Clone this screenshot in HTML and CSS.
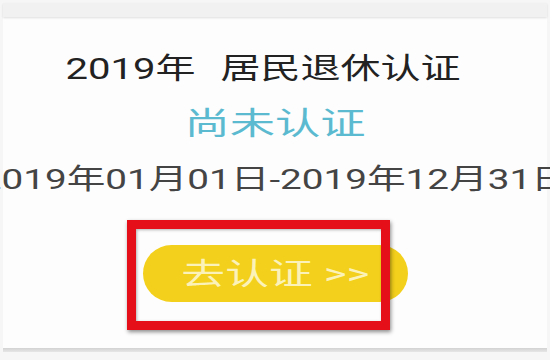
FILE: index.html
```html
<!DOCTYPE html>
<html lang="zh-CN">
<head>
<meta charset="utf-8">
<title>居民退休认证</title>
<link rel="stylesheet" href="styles.css">
</head>
<body>
<div class="page">
  <div class="topbar"></div>
  <div class="card">
    <div class="line title"><span class="stretch">2019年<span class="gap"></span>居民退休认证</span></div>
    <div class="line status"><span class="stretch wide">尚未认证</span></div>
    <div class="line date"><span class="stretch">2019年01月01日-2019年12月31日</span></div>
    <div class="btn-wrap">
      <div class="btn"><span class="stretch wide">去认证 &gt;&gt;</span></div>
      <div class="mark"></div>
    </div>
  </div>
  <div class="bottom"></div>
</div>
</body>
</html>
```
FILE: styles.css
```css
html, body {
  margin: 0;
  padding: 0;
  background: #f6f6f6;
}
body {
  width: 550px;
  height: 360px;
  overflow: hidden;
  font-family: Roboto, "Noto Sans CJK SC", sans-serif;
}
.page {
  padding: 3px 3px 0 3px;
  display: flex;
  flex-direction: column;
}
.topbar {
  height: 14px;
  background: #f1f1f1;
  box-shadow: 0 1px 2px rgba(0,0,0,0.12);
  position: relative;
  z-index: 1;
}
.card {
  background: #fdfdfd;
  height: 331px;
  display: flex;
  flex-direction: column;
  align-items: center;
  box-sizing: border-box;
  padding-top: 38px;
  overflow: visible;
}
.bottom {
  height: 4px;
  background: linear-gradient(#d2d2d2, #e6e6e6);
}
.line {
  width: 544px;
  text-align: center;
  white-space: nowrap;
  line-height: 1;
}
.stretch {
  display: inline-block;
  transform: scaleX(1.38);
  transform-origin: center;
}
.stretch.wide {
  transform: scaleX(1.46);
}
.title {
  font-size: 29px;
  color: #222;
  padding-right: 24px;
  box-sizing: border-box;
}
.gap {
  display: inline-block;
  width: 18px;
}
.status {
  margin-top: 24px;
  font-size: 31px;
  color: #5bbad0;
}
.date {
  margin-top: 27px;
  font-size: 28px;
  color: #444;
}
.btn-wrap {
  margin-top: 51px;
  position: relative;
}
.btn {
  width: 265px;
  height: 57px;
  border-radius: 29px;
  background: #f3d01b;
  color: #fbf2b9;
  font-size: 30px;
  line-height: 57px;
  text-align: center;
}
.mark {
  position: absolute;
  left: -16px;
  top: -25px;
  width: 263px;
  height: 110px;
  box-sizing: border-box;
  border: 9px solid #e50f1a;
  box-shadow: 1px 2px 4px rgba(0,0,0,0.45), inset 1px 1px 3px rgba(0,0,0,0.3);
}
```
